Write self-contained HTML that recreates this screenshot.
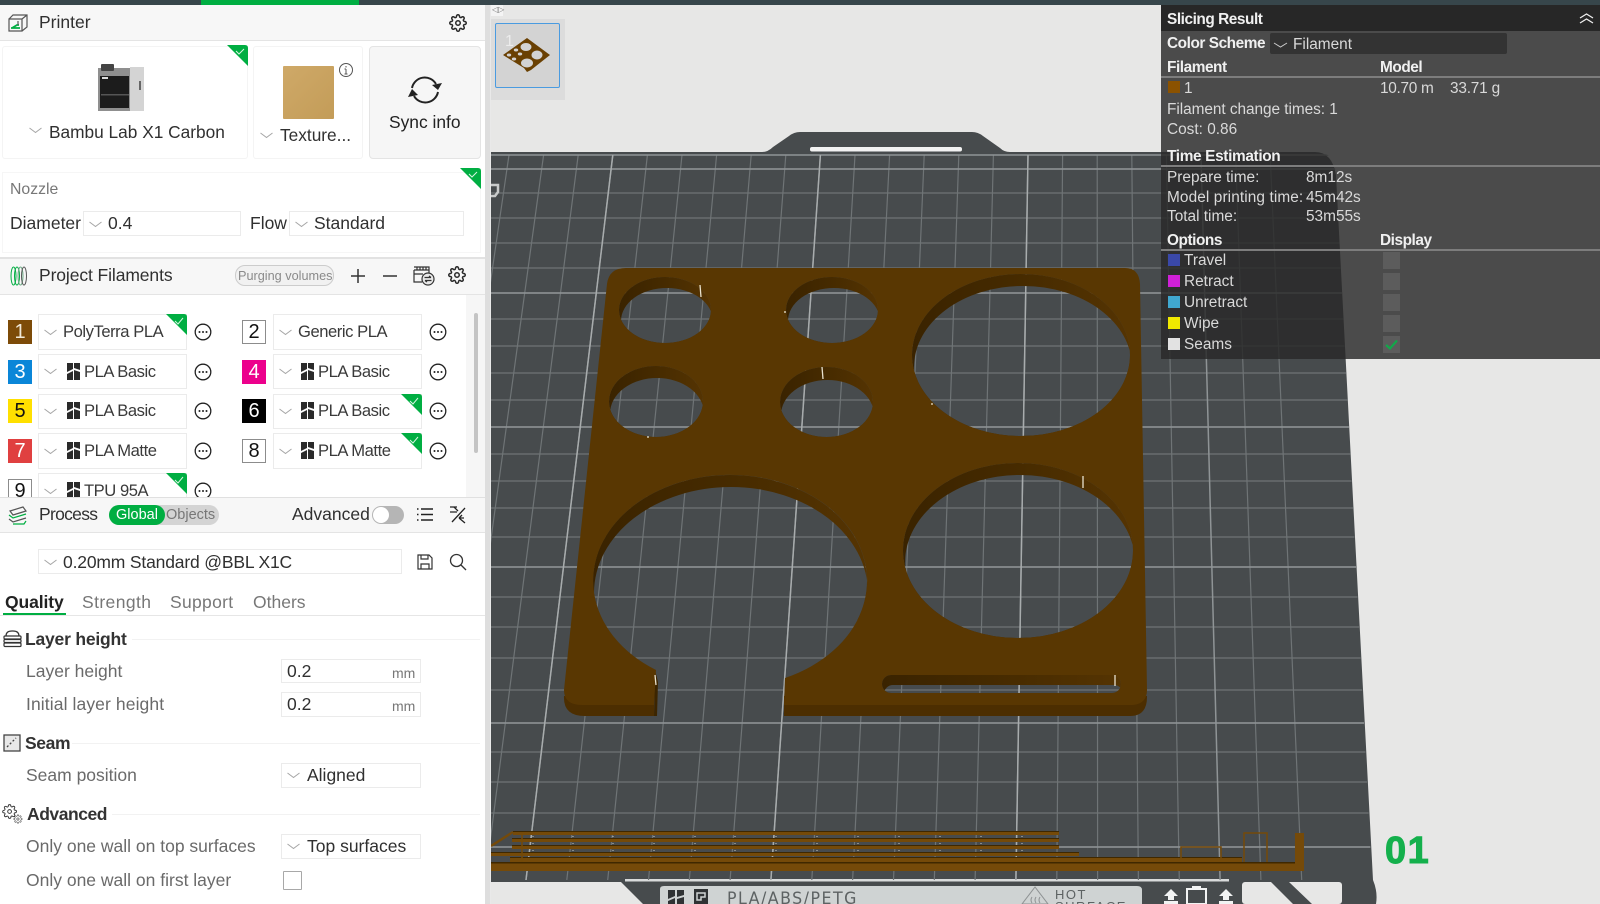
<!DOCTYPE html>
<html><head><meta charset="utf-8">
<style>
html,body{margin:0;padding:0;width:1600px;height:904px;overflow:hidden;background:#e7e7e6;font-family:"Liberation Sans",sans-serif;color:#303030}
#root{position:relative;width:1600px;height:904px;overflow:hidden}
.t{position:absolute;transform:translateY(-50%);white-space:nowrap;font-size:17.5px;line-height:22px}
.a{position:absolute;box-sizing:border-box}
.box{position:absolute;box-sizing:border-box;background:#fff;border:1px solid #ebebeb}
.hd{position:absolute;left:0;width:485px;background:#f7f7f7;border-bottom:1px solid #e4e4e4;box-sizing:border-box}
.b{font-weight:bold;color:#333}
.g{color:#6a6a6a}
.f{font-size:16.6px;letter-spacing:-.45px;color:#3a3a3a}
.p{color:#d9d9d9;font-size:15.4px;line-height:20px;margin-left:-1px;margin-top:1px}
.pb{color:#f0f0f0;font-weight:bold;font-size:15.4px;line-height:20px;letter-spacing:-.45px;margin-left:-1px;margin-top:1.5px}
.sw{position:absolute;width:24px;height:24px;box-sizing:border-box;font-size:20px;line-height:24px;text-align:center}
.ps{position:absolute;left:1168px;width:12px;height:12px}
.ck{position:absolute;left:1383px;width:17px;height:17px;background:#5c5c5c}
svg{position:absolute;overflow:visible}
</style></head><body><div id="root">

<svg style="left:0;top:0" width="1600" height="904" viewBox="0 0 1600 904">
<defs>
<clipPath id="bedclip"><path d="M491 154H1325Q1334 156 1336 175L1372 880H491Z"/></clipPath>
<clipPath id="h6c"><rect x="560" y="460" width="320" height="160"/></clipPath>
<linearGradient id="wg" x1="0" y1="0" x2="1" y2="0"><stop offset="0" stop-color="#3a2300"/><stop offset=".45" stop-color="#452a00"/><stop offset="1" stop-color="#553402"/></linearGradient>
</defs>
<rect width="1600" height="904" fill="#e7e7e6"/>
<path d="M491 152H762Q768 152 773 147L789 136Q794 132 800 132H972Q978 132 983 136L1000 148Q1004 152 1010 152H1315Q1332 152 1336 175L1373 880Q1378 892 1376 904H643L621 882H491Z" fill="#474b4d"/>
<rect x="1242" y="882" width="100" height="22" rx="3" fill="#e7e7e6"/>
<path d="M1271 882H1289L1312 904H1293Z" fill="#474b4d"/>
<rect x="810" y="147" width="152" height="4.5" rx="2" fill="#f2f2f2"/>
<rect x="625" y="879" width="604" height="2.5" fill="#d9dbdb"/>
<g clip-path="url(#bedclip)" stroke="#6f7476" stroke-width="1.2" fill="none">
<path d="M491 169H1400M491 193H1400M491 218H1400M491 243H1400M491 268H1400M491 293H1400M491 319H1400M491 346H1400M491 373H1400M491 400H1400M491 427H1400M491 454H1400M491 481H1400M491 508H1400M491 537H1400M491 567H1400M491 597H1400M491 627H1400M491 658H1400M491 690H1400M491 723H1400M491 752H1400M491 782H1400M491 813H1400M491 847H1400"/>
<path d="M509 155L403.5 880M543.6 155L444.3 880M578.2 155L485.2 880M647.4 155L566.8 880M682 155L607.7 880M716.6 155L648.5 880M751.2 155L689.3 880M785.8 155L730.1 880M855 155L811.8 880M889.6 155L852.6 880M924.2 155L893.5 880M958.8 155L934.3 880M993.4 155L975.1 880M1062.6 155L1056.8 880M1097.2 155L1097.6 880M1131.8 155L1138.4 880M1166.4 155L1179.3 880M1235.6 155L1260.9 880M1270.2 155L1301.7 880"/>
<path stroke="#8f9496" stroke-width="1.5" d="M491 155H1400M491 169H1400M491 293H1400M491 427H1400M491 567H1400M491 723H1400M491 847H1400M612.8 155L526 880M820.4 155L770.9 880M1028 155L1015.9 880M1201 155L1220.1 880"/>
<path stroke="#a8acad" stroke-width="1.4" d="M612.8 155L526 880M820.4 155L770.9 880M1028 155L1015.9 880"/>
</g>
<!-- left artefact -->
<path d="M491 185H498V192L495 196H491" fill="none" stroke="#c9cbcb" stroke-width="2.500"/>
<!-- plate side -->
<path d="M564 696H654V716H585Q563 716 564 696ZM784 696H1147V697Q1147 716 1130 716H784Z" fill="#4c2e01"/>
<!-- walls -->
<g fill="url(#wg)" fill-rule="evenodd">
<path d="M619 310a46 33 0 1 0 92 0a46 33 0 1 0-92 0ZM621 321a46 33 0 1 0 92 0a46 33 0 1 0-92 0Z"/>
<path d="M786 310a46 33 0 1 0 92 0a46 33 0 1 0-92 0ZM788 321a46 33 0 1 0 92 0a46 33 0 1 0-92 0Z"/>
<path d="M912 355a109 81 0 1 0 218 0a109 81 0 1 0-218 0ZM914 367a109 81 0 1 0 218 0a109 81 0 1 0-218 0Z"/>
<path d="M609 401.500a47 35.500 0 1 0 94 0a47 35.500 0 1 0-94 0ZM610 413.500a47 35.500 0 1 0 94 0a47 35.500 0 1 0-94 0Z"/>
<path d="M780 402a46.500 35 0 1 0 93 0a46.500 35 0 1 0-93 0ZM781 415a46.500 35 0 1 0 93 0a46.500 35 0 1 0-93 0Z"/>
<path d="M903 550.500a115 87.500 0 1 0 230 0a115 87.500 0 1 0-230 0ZM905 562.500a115 87.500 0 1 0 230 0a115 87.500 0 1 0-230 0Z"/>
<path clip-path="url(#h6c)" d="M593 581a137 106 0 1 0 274 0a137 106 0 1 0-274 0ZM594 593a137 106 0 1 0 274 0a137 106 0 1 0-274 0Z"/>
<path d="M891 675H1112a9 9 0 0 1 0 18H891a9 9 0 0 1 0-18ZM893 685H1114a9 9 0 0 1 0 18H893a9 9 0 0 1 0-18Z"/>
</g>
<path d="M655 670L658 682L657 716H654Z" fill="#3c2500"/>
<!-- plate top -->
<path fill="#593702" fill-rule="evenodd" d="M626 268H1125Q1139 268 1140 284L1147 690Q1147 705 1130 705H784L785 678A137 106 0 1 0 656 670L654 705H582Q564 705 564 690L607 284Q609 268 626 268Z
M619 310a46 33 0 1 0 92 0a46 33 0 1 0-92 0Z
M786 310a46 33 0 1 0 92 0a46 33 0 1 0-92 0Z
M912 355a109 81 0 1 0 218 0a109 81 0 1 0-218 0Z
M609 401.500a47 35.500 0 1 0 94 0a47 35.500 0 1 0-94 0Z
M780 402a46.500 35 0 1 0 93 0a46.500 35 0 1 0-93 0Z
M903 550.500a115 87.500 0 1 0 230 0a115 87.500 0 1 0-230 0Z
M891 675H1112a9 9 0 0 1 0 18H891a9 9 0 0 1 0-18Z"/>
<!-- seams -->
<path stroke="#e9e2cf" stroke-width="1.3" fill="none" d="M700 285L701 297M822 367L823 379M1083 476V488M1115 675V686M655 675L656 685M785 311V313M647 437H649M931 404H933"/>
<!-- lower lines -->
<g fill="#3f2800">
<rect x="513" y="831" width="546" height="1"/>
<rect x="512" y="838" width="547" height="1"/>
<rect x="512" y="845" width="547" height="1"/>
<rect x="491" y="852" width="588" height="1"/>
<rect x="510" y="857" width="732" height="1"/>
<rect x="491" y="862" width="804" height="1.500"/>
</g>
<g fill="#754a09">
<rect x="513" y="832" width="546" height="3"/>
<rect x="512" y="839" width="547" height="3"/>
<rect x="512" y="846" width="547" height="3"/>
<rect x="491" y="853" width="588" height="3"/>
<rect x="510" y="858" width="732" height="4"/>
<rect x="491" y="863.500" width="813" height="7.500"/>
<rect x="1295" y="833" width="9" height="31"/>
</g>
<path d="M491 846L513 832" stroke="#754a09" stroke-width="2.500"/>
<path d="M522 835V862" stroke="#754a09" stroke-width="1.500"/>
<path fill="none" stroke="#754a09" stroke-width="1.500" d="M1181 858V847H1221V858M1244 862V833H1267V862"/>
<path stroke="#c8c8c2" stroke-width="1" d="M533 836v1M573 836v1M613 836v1M654 836v1M695 836v1M735 836v1M776 836v1M817 836v1M858 836v1M899 836v1M940 836v1M981 836v1M1022 836v1M533 843v1M573 843v1M613 843v1M654 843v1M695 843v1M735 843v1M776 843v1M817 843v1M858 843v1M899 843v1M940 843v1M981 843v1M1022 843v1M533 850v1M573 850v1M613 850v1M654 850v1M695 850v1M735 850v1M776 850v1M817 850v1M858 850v1M899 850v1M940 850v1M981 850v1M1022 850v1"/>
<!-- label plate -->
<path d="M660 889Q660 886 664 886H1137Q1142 886 1142 890V904H660Z" fill="#cfd3d3"/>
<path d="M668 890h7v6l-7 3zM677 890h7v5l-7 2zM668 901l7-3v6h-7zM677 899l7-2v7h-7z" fill="#2f3234"/>
<path d="M694 889h14v15h-14z" fill="#2f3234"/><path d="M697 893h8v4h-4v3h-4z" fill="none" stroke="#cfd3d3" stroke-width="1.500"/>
<path d="M1035 887L1022 904H1048Z" fill="none" stroke="#8e9293" stroke-width="1"/>
<path d="M1032 897q-2 3 0 6M1036 897q-2 3 0 6M1040 897q-2 3 0 6" fill="none" stroke="#8e9293"/>
<path d="M1171 889l-7 7h4v4h6v-4h4zM1164 901h14v3h-14zM1226 889l-7 7h4v4h6v-4h4zM1219 901h14v3h-14z" fill="#f2f3f3"/>
<rect x="1187" y="889" width="19" height="15" fill="none" stroke="#f2f3f3" stroke-width="2"/>
<rect x="1192" y="886" width="9" height="3" fill="#f2f3f3"/>
</svg>
<div class="t" style="left:727px;top:899px;font-size:17px;letter-spacing:1.600px;color:#5d6263;font-family:'DejaVu Sans',sans-serif;transform:translateY(-50%) scaleX(.93);transform-origin:left">PLA/ABS/PETG</div>
<div class="t" style="left:1055px;top:894px;font-size:13px;line-height:12px;letter-spacing:1.500px;color:#5d6263;white-space:pre;transform:translateY(-20%)">HOT
SURFACE</div>
<div class="t" style="left:1385px;top:851px;font-size:38px;line-height:38px;font-weight:bold;color:#14b04c;letter-spacing:1.500px;-webkit-text-stroke:1px #14b04c">01</div>

<!-- top bar -->
<div class="a" style="left:0;top:0;width:1600px;height:5px;background:#37464b"></div>
<div class="a" style="left:201px;top:0;width:158px;height:5px;background:#00ae42"></div>

<!-- thumbnail area -->
<div class="a" style="left:491px;top:5px;width:12px;height:11px;background:#f4f4f4"></div>
<div class="t" style="left:492px;top:10px;font-size:8px;line-height:10px;color:#777">◁▷</div>
<div class="a" style="left:491px;top:19px;width:74px;height:81px;background:#dcdcdc"></div>
<div class="a" style="left:495px;top:23px;width:65px;height:65px;background:#d3d3d3;border:1.500px solid #4a9be0;border-radius:2px"></div>
<svg style="left:495px;top:23px" width="65" height="65" viewBox="495 23 65 65">
<path d="M527 38L550 55L531 70L527 72L524 68L503 55Z" fill="#6a4002"/>
<ellipse cx="526" cy="47" rx="5.500" ry="4" fill="#d3d3d3"/><ellipse cx="537" cy="55" rx="5.500" ry="4.500" fill="#d3d3d3"/>
<ellipse cx="516" cy="50" rx="2.200" ry="1.500" fill="#d3d3d3"/><ellipse cx="520" cy="54" rx="2.200" ry="1.500" fill="#d3d3d3"/><ellipse cx="509" cy="55" rx="2.200" ry="1.500" fill="#d3d3d3"/><ellipse cx="514" cy="59" rx="2.200" ry="1.500" fill="#d3d3d3"/>
<ellipse cx="527" cy="63" rx="6" ry="4.500" fill="#d3d3d3"/>
</svg>
<div class="t" style="left:505px;top:42px;font-size:16px;color:#ececec">1</div>

<!-- LEFT PANEL -->
<div class="a" style="left:0;top:5px;width:485px;height:899px;background:#fff"></div>
<div class="a" style="left:485px;top:5px;width:5px;height:899px;background:#dedede"></div>
<div class="a" style="left:490px;top:5px;width:1px;height:899px;background:#e9e9e9"></div>

<!-- Printer header -->
<div class="hd" style="top:5px;height:36px"></div>
<svg style="left:8px;top:14px" width="20" height="18" viewBox="0 0 20 18" fill="none" stroke="#555" stroke-width="1.200"><path d="M1 5H14V17H1ZM1 5L5 1H19V13L14 17M14 5L19 1"/><path d="M3 14H12M4 14L9 11H11" stroke="#00ae42" stroke-width="1.800"/><path d="M10 7V11" stroke="#555"/></svg>
<div class="t" style="left:39px;top:22px">Printer</div>
<svg style="left:449px;top:14px" width="18" height="18" viewBox="0 0 24 24" fill="none" stroke="#2a2a2a" stroke-width="2"><use href="#gear"/></svg>

<!-- Printer card -->
<div class="box" style="left:2px;top:46px;width:246px;height:113px;border-color:#f4f4f4;border-radius:3px"></div>
<svg style="left:227px;top:45px" width="22" height="22" viewBox="0 0 22 22"><path d="M0 0H18Q21 0 21 3V21Z" fill="#00ae42"/><path d="M9 6L12 9L17 4" stroke="#d6f5e0" stroke-width="1" fill="none"/></svg>
<svg style="left:97px;top:63px" width="48" height="48" viewBox="0 0 48 48">
<rect x="1" y="5" width="33" height="43" fill="#8f8f8f"/><rect x="33" y="4" width="14" height="44" fill="#d4d4d4"/>
<rect x="3" y="13" width="29" height="32" fill="#1c1c1c"/><rect x="4" y="1" width="13" height="7" rx="1" fill="#444"/>
<rect x="5" y="14" width="6" height="2" fill="#ddd"/><rect x="4" y="31" width="28" height="1.500" fill="#555"/><rect x="42" y="18" width="2" height="9" fill="#666"/>
</svg>
<svg style="left:29px;top:127px" width="13" height="7" viewBox="0 0 13 7"><use href="#chev"/></svg>
<div class="t" style="left:49px;top:132px;font-size:17.300px">Bambu Lab X1 Carbon</div>

<!-- plate card -->
<div class="box" style="left:253px;top:46px;width:110px;height:113px;border-color:#f4f4f4;border-radius:3px"></div>
<div class="a" style="left:283px;top:66px;width:51px;height:53px;background:linear-gradient(135deg,#cfa968,#c39c58);border-radius:1px"></div>
<svg style="left:338px;top:62px" width="16" height="16" viewBox="0 0 16 16" fill="none" stroke="#555"><circle cx="8" cy="8" r="6.500"/><path d="M8 7V12M8 4V5.500M6.500 7H8M6.500 12H9.500"/></svg>
<svg style="left:260px;top:132px" width="13" height="7" viewBox="0 0 13 7"><use href="#chev"/></svg>
<div class="t" style="left:280px;top:135px;font-size:17.300px">Texture...</div>

<!-- sync -->
<div class="a" style="left:369px;top:46px;width:112px;height:113px;background:#f6f6f6;border:1px solid #e4e4e4;border-radius:4px"></div>
<svg style="left:407px;top:75px" width="36" height="30" viewBox="0 0 36 30" fill="none" stroke="#222" stroke-width="2"><path d="M5 13A13 13 0 0 1 29 9"/><path d="M31 17A13 13 0 0 1 7 21"/><path d="M25 10L35 8L31 15Z" fill="#222" stroke="none"/><path d="M11 20L1 22L5 14Z" fill="#222" stroke="none"/></svg>
<div class="t" style="left:389px;top:122px;font-size:17.400px;color:#222">Sync info</div>

<!-- nozzle -->
<div class="box" style="left:2px;top:172px;width:479px;height:81px;border-color:#f6f6f6"></div>
<svg style="left:460px;top:168px" width="21" height="21" viewBox="0 0 21 21"><path d="M0 0H18Q21 0 21 3V21Z" fill="#00ae42"/><path d="M9 6L12 9L17 4" stroke="#d6f5e0" stroke-width="1" fill="none"/></svg>
<div class="t g" style="left:10px;top:190px;font-size:15.800px;color:#777">Nozzle</div>
<div class="t" style="left:10px;top:223px">Diameter</div>
<div class="box" style="left:83px;top:211px;width:158px;height:25px"></div>
<svg style="left:89px;top:221px" width="13" height="7" viewBox="0 0 13 7"><use href="#chev"/></svg>
<div class="t" style="left:108px;top:223px">0.4</div>
<div class="t" style="left:250px;top:223px">Flow</div>
<div class="box" style="left:289px;top:211px;width:175px;height:25px"></div>
<svg style="left:295px;top:221px" width="13" height="7" viewBox="0 0 13 7"><use href="#chev"/></svg>
<div class="t" style="left:314px;top:223px">Standard</div>

<!-- Project Filaments header -->
<div class="hd" style="top:257px;height:38px;border-top:2.500px solid #e2e2e2"></div>
<svg style="left:10px;top:265px" width="18" height="22" viewBox="0 0 18 22" fill="none" stroke="#00ae42" stroke-width="1"><ellipse cx="3.500" cy="11" rx="2.500" ry="9"/><ellipse cx="7" cy="11" rx="2.500" ry="9"/><ellipse cx="10.500" cy="11" rx="2.500" ry="9" stroke="#6aa783"/><ellipse cx="14" cy="11" rx="2.500" ry="9" stroke="#555"/></svg>
<div class="t" style="left:39px;top:275px;letter-spacing:-.1px">Project Filaments</div>
<div class="a" style="left:235px;top:265px;width:99px;height:21px;border:1px solid #ccc;border-radius:10px;background:#f1f1f1"></div>
<div class="t" style="left:238px;top:276px;font-size:12.700px;color:#8a8a8a">Purging volumes</div>
<svg style="left:350px;top:268px" width="16" height="16" viewBox="0 0 16 16" stroke="#333" stroke-width="1.500"><path d="M8 1V15M1 8H15"/></svg>
<svg style="left:382px;top:268px" width="16" height="16" viewBox="0 0 16 16" stroke="#333" stroke-width="1.500"><path d="M1 8H15"/></svg>
<svg style="left:413px;top:266px" width="22" height="20" viewBox="0 0 22 20" fill="none" stroke="#333" stroke-width="1.200"><path d="M1 4H16V8M1 4V16H9M1 1H16V4M4 1V4M7 1V4M10 1V4M13 1V4M1 8H10"/><circle cx="15" cy="13" r="6" fill="#e9e9e9"/><path d="M11.500 11.500H18M18 11.500L16 10M18.500 14.500H12M12 14.500L14 16"/></svg>
<svg style="left:448px;top:266px" width="18" height="18" viewBox="0 0 24 24" fill="none" stroke="#2a2a2a" stroke-width="2"><use href="#gear"/></svg>

<!-- filament rows -->
<div class="a" style="left:466px;top:295px;width:19px;height:202px;background:#f6f6f6"></div>
<div class="a" style="left:474px;top:313px;width:4px;height:140px;background:#c4c4c4;border-radius:2px"></div>

<div class="sw" style="left:8px;top:320px;background:#7d4b08;color:#f0e8d8">1</div>
<div class="box" style="left:38px;top:314px;width:149px;height:36px"></div>
<svg style="left:44px;top:329px" width="13" height="7" viewBox="0 0 13 7"><use href="#chev"/></svg>
<div class="t f" style="left:63px;top:332px">PolyTerra PLA</div>
<svg style="left:166px;top:314px" width="21" height="21" viewBox="0 0 21 21"><use href="#tri"/></svg>
<svg style="left:194px;top:323px" width="18" height="18" viewBox="0 0 18 18"><use href="#dots"/></svg>

<div class="sw" style="left:242px;top:320px;background:#fff;border:1px solid #8c8c8c;color:#111;line-height:22px">2</div>
<div class="box" style="left:273px;top:314px;width:149px;height:36px"></div>
<svg style="left:279px;top:329px" width="13" height="7" viewBox="0 0 13 7"><use href="#chev"/></svg>
<div class="t f" style="left:298px;top:332px">Generic PLA</div>
<svg style="left:429px;top:323px" width="18" height="18" viewBox="0 0 18 18"><use href="#dots"/></svg>

<div class="sw" style="left:8px;top:360px;background:#0a86d8;color:#fff">3</div>
<div class="box" style="left:38px;top:354px;width:149px;height:35px"></div>
<svg style="left:44px;top:368px" width="13" height="7" viewBox="0 0 13 7"><use href="#chev"/></svg>
<svg style="left:67px;top:363px" width="14" height="17" viewBox="0 0 14 17"><use href="#bb"/></svg>
<div class="t f" style="left:84px;top:372px">PLA Basic</div>
<svg style="left:194px;top:363px" width="18" height="18" viewBox="0 0 18 18"><use href="#dots"/></svg>

<div class="sw" style="left:242px;top:360px;background:#ec008c;color:#fff">4</div>
<div class="box" style="left:273px;top:354px;width:149px;height:35px"></div>
<svg style="left:279px;top:368px" width="13" height="7" viewBox="0 0 13 7"><use href="#chev"/></svg>
<svg style="left:301px;top:363px" width="14" height="17" viewBox="0 0 14 17"><use href="#bb"/></svg>
<div class="t f" style="left:318px;top:372px">PLA Basic</div>
<svg style="left:429px;top:363px" width="18" height="18" viewBox="0 0 18 18"><use href="#dots"/></svg>

<div class="sw" style="left:8px;top:399px;background:#ffe000;color:#111">5</div>
<div class="box" style="left:38px;top:394px;width:149px;height:35px"></div>
<svg style="left:44px;top:408px" width="13" height="7" viewBox="0 0 13 7"><use href="#chev"/></svg>
<svg style="left:67px;top:402px" width="14" height="17" viewBox="0 0 14 17"><use href="#bb"/></svg>
<div class="t f" style="left:84px;top:411px">PLA Basic</div>
<svg style="left:194px;top:402px" width="18" height="18" viewBox="0 0 18 18"><use href="#dots"/></svg>

<div class="sw" style="left:242px;top:399px;background:#000;color:#fff">6</div>
<div class="box" style="left:273px;top:394px;width:149px;height:35px"></div>
<svg style="left:279px;top:408px" width="13" height="7" viewBox="0 0 13 7"><use href="#chev"/></svg>
<svg style="left:301px;top:402px" width="14" height="17" viewBox="0 0 14 17"><use href="#bb"/></svg>
<div class="t f" style="left:318px;top:411px">PLA Basic</div>
<svg style="left:401px;top:394px" width="21" height="21" viewBox="0 0 21 21"><use href="#tri"/></svg>
<svg style="left:429px;top:402px" width="18" height="18" viewBox="0 0 18 18"><use href="#dots"/></svg>

<div class="sw" style="left:8px;top:439px;background:#e04040;color:#fff">7</div>
<div class="box" style="left:38px;top:433px;width:149px;height:36px"></div>
<svg style="left:44px;top:448px" width="13" height="7" viewBox="0 0 13 7"><use href="#chev"/></svg>
<svg style="left:67px;top:442px" width="14" height="17" viewBox="0 0 14 17"><use href="#bb"/></svg>
<div class="t f" style="left:84px;top:451px">PLA Matte</div>
<svg style="left:194px;top:442px" width="18" height="18" viewBox="0 0 18 18"><use href="#dots"/></svg>

<div class="sw" style="left:242px;top:439px;background:#fff;border:1px solid #8c8c8c;color:#111;line-height:22px">8</div>
<div class="box" style="left:273px;top:433px;width:149px;height:36px"></div>
<svg style="left:279px;top:448px" width="13" height="7" viewBox="0 0 13 7"><use href="#chev"/></svg>
<svg style="left:301px;top:442px" width="14" height="17" viewBox="0 0 14 17"><use href="#bb"/></svg>
<div class="t f" style="left:318px;top:451px">PLA Matte</div>
<svg style="left:401px;top:433px" width="21" height="21" viewBox="0 0 21 21"><use href="#tri"/></svg>
<svg style="left:429px;top:442px" width="18" height="18" viewBox="0 0 18 18"><use href="#dots"/></svg>

<div class="sw" style="left:8px;top:479px;background:#fff;border:1px solid #8c8c8c;color:#111;line-height:22px">9</div>
<div class="box" style="left:38px;top:473px;width:149px;height:36px"></div>
<svg style="left:44px;top:488px" width="13" height="7" viewBox="0 0 13 7"><use href="#chev"/></svg>
<svg style="left:67px;top:482px" width="14" height="17" viewBox="0 0 14 17"><use href="#bb"/></svg>
<div class="t f" style="left:84px;top:491px">TPU 95A</div>
<svg style="left:166px;top:473px" width="21" height="21" viewBox="0 0 21 21"><use href="#tri"/></svg>
<svg style="left:194px;top:482px" width="18" height="18" viewBox="0 0 18 18"><use href="#dots"/></svg>

<!-- Process header -->
<div class="a" style="left:0;top:497px;width:485px;height:407px;background:#fff"></div>
<div class="hd" style="top:497px;height:36px;border-top:1px solid #e0e0e0"></div>
<svg style="left:8px;top:506px" width="20" height="19" viewBox="0 0 20 19" fill="none" stroke="#555" stroke-width="1.200"><path d="M2 5L15 1L18 5L5 9Z"/><path d="M1 9L5 12L18 8" stroke="#00ae42"/><path d="M1 13L5 16L18 12" stroke="#555"/><path d="M5 18H16L18 15" stroke="#00ae42"/></svg>
<div class="t" style="left:39px;top:514px;letter-spacing:-.7px">Process</div>
<div class="a" style="left:109px;top:505px;width:110px;height:20px;background:#d4d4d4;border-radius:10px"></div>
<div class="a" style="left:109px;top:505px;width:56px;height:20px;background:#00ae42;border-radius:10px"></div>
<div class="t" style="left:116px;top:515px;font-size:14.500px;color:#fff">Global</div>
<div class="t" style="left:166px;top:515px;font-size:14.500px;color:#777">Objects</div>
<div class="t" style="left:292px;top:514px">Advanced</div>
<div class="a" style="left:372px;top:506px;width:32px;height:18px;background:#b5b5b5;border-radius:9px"></div>
<div class="a" style="left:373px;top:507px;width:16px;height:16px;background:#fff;border-radius:8px"></div>
<svg style="left:416px;top:507px" width="18" height="15" viewBox="0 0 18 15" stroke="#222" stroke-width="1.500" fill="none"><path d="M5 2H17M5 7.500H17M5 13H17M1 2H2.500M1 7.500H2.500M1 13H2.500"/></svg>
<svg style="left:449px;top:506px" width="18" height="18" viewBox="0 0 18 18" stroke="#222" stroke-width="1.300" fill="none"><path d="M1 1H8M3 16L16 2M10 12L16 17M10 12L13 9M10 12H15" /><path d="M1 6L8 6M5 1L9 5"/></svg>

<!-- preset -->
<div class="box" style="left:38px;top:549px;width:364px;height:25px"></div>
<svg style="left:44px;top:559px" width="13" height="7" viewBox="0 0 13 7"><use href="#chev"/></svg>
<div class="t" style="left:63px;top:562px;letter-spacing:-.17px">0.20mm Standard @BBL X1C</div>
<svg style="left:417px;top:554px" width="16" height="16" viewBox="0 0 16 16" fill="none" stroke="#333" stroke-width="1.200"><path d="M1 1H12L15 4V15H1ZM4 1V5H11V1M4 15V10H12V15"/></svg>
<svg style="left:449px;top:553px" width="18" height="18" viewBox="0 0 18 18" fill="none" stroke="#333" stroke-width="1.300"><circle cx="7.500" cy="7.500" r="6"/><path d="M12 12L17 17"/></svg>

<!-- tabs -->
<div class="t b" style="left:5px;top:602px;font-size:17.500px;color:#222;letter-spacing:-.1px">Quality</div>
<div class="t" style="left:82px;top:602px;color:#777;letter-spacing:.4px">Strength</div>
<div class="t" style="left:170px;top:602px;color:#777;letter-spacing:.3px">Support</div>
<div class="t" style="left:253px;top:602px;color:#777">Others</div>
<div class="a" style="left:0;top:615px;width:485px;height:1px;background:#e6e6e6"></div>
<div class="a" style="left:3px;top:613px;width:63px;height:2px;background:#00ae42"></div>

<!-- Layer height -->
<svg style="left:3px;top:630px" width="19" height="18" viewBox="0 0 19 18" fill="none" stroke="#333" stroke-width="1.200"><path d="M3 6Q3 1 9 1H10Q16 1 16 6"/><rect x="1" y="6" width="17" height="3" rx="1"/><rect x="1" y="9.500" width="17" height="3" rx="1"/><rect x="1" y="13" width="17" height="3.500" rx="1"/></svg>
<div class="t b" style="left:25px;top:639px;letter-spacing:-.2px">Layer height</div>
<div class="a" style="left:132px;top:639px;width:348px;height:1px;background:#f2f2f2"></div>
<div class="t g" style="left:26px;top:671px">Layer height</div>
<div class="box" style="left:281px;top:659px;width:140px;height:24px"></div>
<div class="t" style="left:287px;top:671px">0.2</div>
<div class="t g" style="left:392px;top:673px;font-size:14px;color:#777">mm</div>
<div class="t g" style="left:26px;top:704px;letter-spacing:.1px">Initial layer height</div>
<div class="box" style="left:281px;top:692px;width:140px;height:25px"></div>
<div class="t" style="left:287px;top:704px">0.2</div>
<div class="t g" style="left:392px;top:706px;font-size:14px;color:#777">mm</div>

<!-- Seam -->
<svg style="left:3px;top:734px" width="18" height="18" viewBox="0 0 18 18" fill="none" stroke="#444" stroke-width="1.300"><rect x="1" y="1" width="16" height="16" fill="#e8e8e8"/><path d="M4 13L13 4" stroke-dasharray="2 2"/></svg>
<div class="t b" style="left:25px;top:743px;letter-spacing:-.4px">Seam</div>
<div class="a" style="left:72px;top:743px;width:408px;height:1px;background:#f2f2f2"></div>
<div class="t g" style="left:26px;top:775px">Seam position</div>
<div class="box" style="left:281px;top:763px;width:140px;height:25px"></div>
<svg style="left:287px;top:772px" width="13" height="7" viewBox="0 0 13 7"><use href="#chev"/></svg>
<div class="t" style="left:307px;top:775px">Aligned</div>

<!-- Advanced -->
<svg style="left:2px;top:804px" width="21" height="20" viewBox="0 0 24 23" fill="none" stroke="#333" stroke-width="1.500"><g transform="scale(.72)"><use href="#gear"/></g><g transform="translate(13 12) scale(.44)"><use href="#gear"/></g></svg>
<div class="t b" style="left:27px;top:814px;letter-spacing:-.45px">Advanced</div>
<div class="a" style="left:112px;top:814px;width:368px;height:1px;background:#f2f2f2"></div>
<div class="t g" style="left:26px;top:846px">Only one wall on top surfaces</div>
<div class="box" style="left:281px;top:834px;width:140px;height:25px"></div>
<svg style="left:287px;top:843px" width="13" height="7" viewBox="0 0 13 7"><use href="#chev"/></svg>
<div class="t" style="left:307px;top:846px">Top surfaces</div>
<div class="t g" style="left:26px;top:880px">Only one wall on first layer</div>
<div class="a" style="left:283px;top:871px;width:19px;height:19px;background:#fff;border:1.500px solid #a8a8a8;border-radius:1px"></div>

<!-- Slicing Result -->
<div class="a" style="left:1161px;top:5px;width:439px;height:354px;background:rgba(40,40,40,.82)"></div>
<div class="a" style="left:1161px;top:5px;width:439px;height:26px;background:rgba(20,20,20,.65)"></div>
<div class="t pb" style="left:1168px;top:18px">Slicing Result</div>
<svg style="left:1579px;top:13px" width="15" height="11" viewBox="0 0 15 11" fill="none" stroke="#eee" stroke-width="1.300"><path d="M1 5L7.500 1L14 5M1 10L7.500 6L14 10"/></svg>
<div class="t pb" style="left:1168px;top:42px">Color Scheme</div>
<div class="a" style="left:1270px;top:33px;width:237px;height:21px;background:#333;border-radius:2px"></div>
<svg style="left:1274px;top:42px" width="13" height="7" viewBox="0 0 13 7"><path d="M0 1L6.500 5L13 1" fill="none" stroke="#ccc" stroke-width="1"/></svg>
<div class="t p" style="left:1294px;top:44px">Filament</div>
<div class="t pb" style="left:1168px;top:66px">Filament</div>
<div class="t pb" style="left:1381px;top:66px">Model</div>
<div class="a" style="left:1161px;top:76px;width:439px;height:1.500px;background:#7d7d7d"></div>
<div class="ps" style="top:81px;background:#8b5200"></div>
<div class="t p" style="left:1185px;top:88px">1</div>
<div class="t p" style="left:1381px;top:88px;letter-spacing:-.3px">10.70 m</div>
<div class="t p" style="left:1451px;top:88px;letter-spacing:-.2px">33.71 g</div>
<div class="t p" style="left:1168px;top:109px;letter-spacing:-.05px">Filament change times: 1</div>
<div class="t p" style="left:1168px;top:129px">Cost: 0.86</div>
<div class="t pb" style="left:1168px;top:155px;letter-spacing:-.35px">Time Estimation</div>
<div class="a" style="left:1161px;top:165px;width:439px;height:1.500px;background:#7d7d7d"></div>
<div class="t p" style="left:1168px;top:177px">Prepare time:</div>
<div class="t p" style="left:1307px;top:177px">8m12s</div>
<div class="t p" style="left:1168px;top:197px;letter-spacing:.1px">Model printing time:</div>
<div class="t p" style="left:1307px;top:197px">45m42s</div>
<div class="t p" style="left:1168px;top:216px">Total time:</div>
<div class="t p" style="left:1307px;top:216px">53m55s</div>
<div class="t pb" style="left:1168px;top:239px">Options</div>
<div class="t pb" style="left:1381px;top:239px">Display</div>
<div class="a" style="left:1161px;top:249px;width:439px;height:1.500px;background:#7d7d7d"></div>
<div class="ps" style="top:254px;background:#3a48a8"></div>
<div class="t p" style="left:1185px;top:260px">Travel</div>
<div class="ps" style="top:275px;background:#d020d8"></div>
<div class="t p" style="left:1185px;top:281px">Retract</div>
<div class="ps" style="top:296px;background:#40a8d0"></div>
<div class="t p" style="left:1185px;top:302px">Unretract</div>
<div class="ps" style="top:317px;background:#f0e800"></div>
<div class="t p" style="left:1185px;top:323px">Wipe</div>
<div class="ps" style="top:338px;background:#e2e2e2"></div>
<div class="t p" style="left:1185px;top:344px">Seams</div>
<div class="ck" style="top:252px"></div>
<div class="ck" style="top:273px"></div>
<div class="ck" style="top:294px"></div>
<div class="ck" style="top:315px"></div>
<div class="ck" style="top:336px"></div>
<svg style="left:1385px;top:339px" width="13" height="11" viewBox="0 0 13 11" fill="none" stroke="#12a84a" stroke-width="2.200"><path d="M1 6L5 9.500L12 1.500"/></svg>

<svg width="0" height="0" style="left:0;top:0"><defs>
<g id="gear"><path d="M12 15a3 3 0 1 0 0-6 3 3 0 0 0 0 6z"/><path d="M19.400 15a1.650 1.650 0 0 0 .33 1.820l.06.06a2 2 0 0 1 0 2.830 2 2 0 0 1-2.830 0l-.06-.06a1.650 1.650 0 0 0-1.820-.33 1.650 1.650 0 0 0-1 1.510V21a2 2 0 0 1-2 2 2 2 0 0 1-2-2v-.09A1.650 1.650 0 0 0 9 19.400a1.650 1.650 0 0 0-1.820.33l-.06.06a2 2 0 0 1-2.830 0 2 2 0 0 1 0-2.830l.06-.06a1.650 1.650 0 0 0 .33-1.820 1.650 1.650 0 0 0-1.510-1H3a2 2 0 0 1-2-2 2 2 0 0 1 2-2h.09A1.650 1.650 0 0 0 4.600 9a1.650 1.650 0 0 0-.33-1.820l-.06-.06a2 2 0 0 1 0-2.830 2 2 0 0 1 2.830 0l.06.06a1.650 1.650 0 0 0 1.820.33H9a1.650 1.650 0 0 0 1-1.510V3a2 2 0 0 1 2-2 2 2 0 0 1 2 2v.09a1.650 1.650 0 0 0 1 1.510 1.650 1.650 0 0 0 1.820-.33l.06-.06a2 2 0 0 1 2.830 0 2 2 0 0 1 0 2.830l-.06.06a1.650 1.650 0 0 0-.33 1.820V9a1.650 1.650 0 0 0 1.510 1H21a2 2 0 0 1 2 2 2 2 0 0 1-2 2h-.09a1.650 1.650 0 0 0-1.510 1z"/></g>
<path id="chev" d="M0.500 1L6.500 5.500L12.500 1" fill="none" stroke="#a5a5a5" stroke-width="1"/>
<g id="tri"><path d="M0 0H18Q21 0 21 3V21Z" fill="#00ae42"/><path d="M9 7L12 10L17 4" stroke="#d6f5e0" stroke-width="1" fill="none"/></g>
<g id="dots"><circle cx="9" cy="9" r="7.800" fill="#fff" stroke="#222" stroke-width="1.300"/><circle cx="5.500" cy="9" r="1" fill="#222"/><circle cx="9" cy="9" r="1" fill="#222"/><circle cx="12.500" cy="9" r="1" fill="#222"/></g>
<g id="bb" fill="#2a2a2a"><path d="M0 0H6V6L0 9ZM0 11L6 8V17H0ZM7 0H13V7L7 5ZM7 7L13 9V17H7Z"/></g>
</defs></svg>
</div></body></html>
